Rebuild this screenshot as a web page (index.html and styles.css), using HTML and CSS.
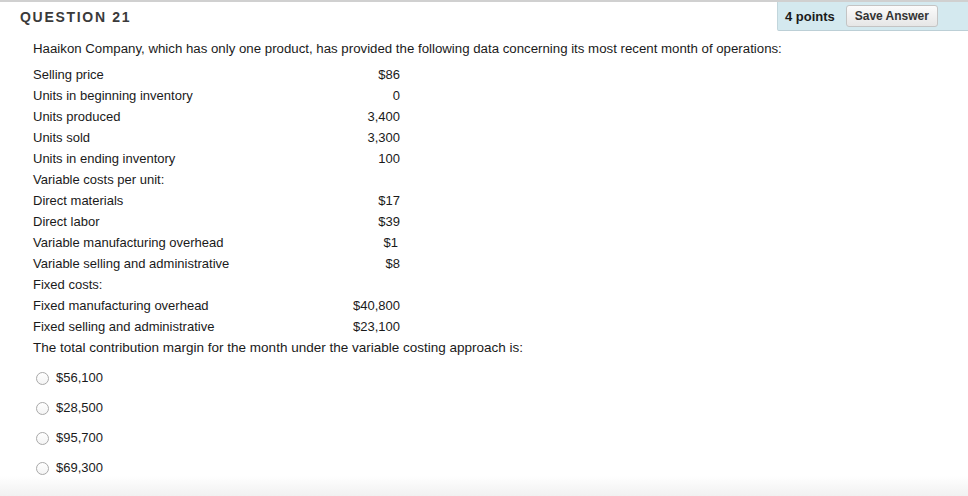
FILE: index.html
```html
<!DOCTYPE html>
<html>
<head>
<meta charset="utf-8">
<link rel="stylesheet" href="styles.css">
</head>
<body>
<div class="page">
  <div class="header">
    <h2 class="qtitle">QUESTION 21</h2>
    <div class="points">
      <span class="pts">4 points</span>
      <button class="save">Save Answer</button>
    </div>
  </div>
  <div class="content">
    <p class="intro">Haaikon Company, which has only one product, has provided the following data concerning its most recent month of operations:</p>
    <div class="data">
      <span>Selling price</span><span class="v">$86</span>
      <span>Units in beginning inventory</span><span class="v">0</span>
      <span>Units produced</span><span class="v">3,400</span>
      <span>Units sold</span><span class="v">3,300</span>
      <span>Units in ending inventory</span><span class="v">100</span>
      <span>Variable costs per unit:</span><span class="v"></span>
      <span>Direct materials</span><span class="v">$17</span>
      <span>Direct labor</span><span class="v">$39</span>
      <span>Variable manufacturing overhead</span><span class="v shift">$1</span>
      <span>Variable selling and administrative</span><span class="v">$8</span>
      <span>Fixed costs:</span><span class="v"></span>
      <span>Fixed manufacturing overhead</span><span class="v">$40,800</span>
      <span>Fixed selling and administrative</span><span class="v">$23,100</span>
    </div>
    <p class="prompt">The total contribution margin for the month under the variable costing approach is:</p>
    <ul class="options">
      <li><span class="radio"></span><span>$56,100</span></li>
      <li><span class="radio"></span><span>$28,500</span></li>
      <li><span class="radio"></span><span>$95,700</span></li>
      <li><span class="radio"></span><span>$69,300</span></li>
    </ul>
  </div>
</div>
</body>
</html>
```

FILE: styles.css
```css
* { box-sizing: border-box; }
html, body { margin: 0; padding: 0; }
body {
  width: 968px;
  height: 496px;
  overflow: hidden;
  font-family: "Liberation Sans", Arial, sans-serif;
  color: #1a1a1a;
  background: linear-gradient(to bottom, #fff 0, #fff 476px, #f1f1f1 496px);
}
.page {
  border-top: 2px solid #d0d0d0;
  height: 494px;
}
.header {
  display: flex;
  justify-content: space-between;
  align-items: flex-start;
  height: 29px;
}
.qtitle {
  margin: 0;
  padding: 7px 0 0 20px;
  font-size: 14px;
  font-weight: bold;
  letter-spacing: 1.7px;
  color: #3a3a3a;
}
.points {
  display: flex;
  align-items: center;
  gap: 11px;
  width: 191px;
  height: 29px;
  padding: 0 0 0 7px;
  background: #d4e9ef;
  border-left: 1px solid #c2d6dc;
  border-bottom: 1px solid #bccfd6;
  border-bottom-left-radius: 2px;
}
.pts {
  font-size: 13px;
  font-weight: bold;
  color: #1a1a1a;
}
.save {
  height: 22px;
  width: 92px;
  padding: 0;
  font-family: "Liberation Sans", Arial, sans-serif;
  font-size: 12px;
  font-weight: bold;
  color: #333;
  background: linear-gradient(to bottom, #fbfbfb, #e6e6e6);
  border: 1px solid #c4c4c4;
  border-radius: 3px;
}
.content {
  padding: 10px 0 0 33px;
  font-size: 13px;
}
.intro {
  margin: 0 0 7px;
  line-height: 16px;
  font-size: 13.25px;
}
.data {
  display: grid;
  grid-template-columns: 300px 67px;
  grid-auto-rows: 21px;
  align-items: center;
}
.v { text-align: right; }
.v.shift { padding-right: 2px; }
.prompt {
  margin: 0;
  line-height: 21px;
  font-size: 13.5px;
}
.options {
  list-style: none;
  margin: 4px 0 0;
  padding: 0 0 0 3px;
}
.options li {
  display: flex;
  align-items: center;
  gap: 7px;
  height: 30px;
}
.radio {
  width: 13px;
  height: 13px;
  border-radius: 50%;
  border: 1px solid #a9a9a9;
  background: linear-gradient(to bottom, #fff, #f4f4f4);
  margin-top: 2px;
}
```
